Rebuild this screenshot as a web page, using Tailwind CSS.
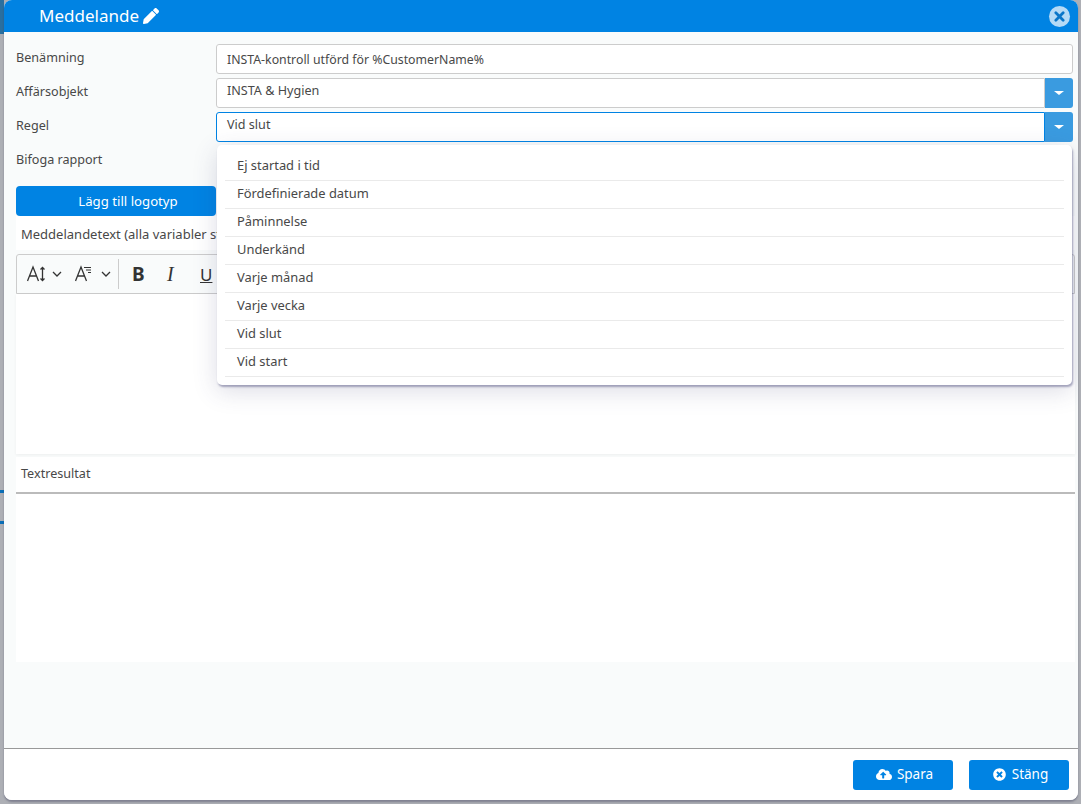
<!DOCTYPE html>
<html lang="en">
  <head>
    <meta charset="UTF-8" />
    <meta name="viewport" content="width=device-width, initial-scale=1.0" />
    <title>Meddelande</title>
    <script src="https://cdn.jsdelivr.net/npm/@tailwindcss/browser@4"></script>
  </head>
  <body class="relative h-screen overflow-hidden bg-[#adafb5] font-['Noto_Sans','Open_Sans',sans-serif] text-[12.6px] text-[#484848]">
    <!-- bits of the page behind the modal -->
    <div class="absolute top-0 left-0 h-[34px] w-[4px] bg-[#2a6f9f]"></div>
    <div class="absolute top-[490px] left-0 h-[3px] w-[4px] bg-[#0a6fb8]"></div>
    <div class="absolute top-[521px] left-0 h-[3px] w-[4px] bg-[#0a6fb8]"></div>

    <div class="relative ml-[4px] flex h-[800px] w-[1074px] flex-col overflow-hidden rounded-t-[8px] rounded-b-[8px] bg-[#f9fbfb] shadow-[0_2px_2px_rgba(60,60,90,0.4)]">
      <!-- header -->
      <div class="flex h-[32px] shrink-0 items-center justify-between bg-[#0083e3] pl-[35px] pr-[8px] text-white">
        <div class="flex items-center gap-[4px] text-[17px]">
          <span>Meddelande</span>
          <svg class="h-[16px] w-[16px]" viewBox="0 0 512 512" fill="#fff"><path d="M497.9 142.1l-46.1 46.1c-4.7 4.7-12.3 4.7-17 0l-111-111c-4.7-4.7-4.7-12.3 0-17l46.1-46.1c18.7-18.7 49.1-18.7 67.9 0l60.1 60.1c18.8 18.7 18.8 49.1 0 67.9zM284.2 99.8L21.6 362.4.4 483.9c-2.9 16.4 11.4 30.6 27.8 27.8l121.5-21.3 262.6-262.6c4.7-4.7 4.7-12.3 0-17l-111-111c-4.8-4.7-12.4-4.7-17.1 0z"/></svg>
        </div>
        <div class="flex h-[21px] w-[21px] items-center justify-center rounded-full bg-[#b5daf6]">
          <svg class="h-[11px] w-[11px]" viewBox="0 0 12 12" stroke="#0a76c9" stroke-width="3" stroke-linecap="round"><path d="M2 2l8 8M10 2l-8 8"/></svg>
        </div>
      </div>

      <!-- form -->
      <div class="flex flex-1 flex-col pl-[12px] pr-[3px]">
        <div class="mt-[12px] mr-[2px] flex h-[30px] items-start">
          <label class="w-[200px] pt-[5px]">Benämning</label>
          <div class="flex h-[30px] flex-1 items-center rounded-[3px] border border-[#ccc] bg-white pt-[2px] pl-[10px] pr-[10px] text-[12.3px]">INSTA-kontroll utförd för %CustomerName%</div>
        </div>
        <div class="mt-[4px] mr-[2px] flex h-[30px] items-start">
          <label class="w-[200px] pt-[5px]">Affärsobjekt</label>
          <div class="flex h-[30px] flex-1 rounded-[3px]">
            <div class="flex-1 rounded-l-[3px] border border-[#ccc] bg-white pl-[10px] pt-[3px]">INSTA &amp; Hygien</div>
            <div class="flex w-[28px] items-center justify-center rounded-r-[3px] bg-[#3a9be0]"><span class="h-0 w-0 border-x-[5px] border-t-[4px] border-x-transparent border-t-white"></span></div>
          </div>
        </div>
        <div class="mt-[4px] mr-[2px] flex h-[30px] items-start">
          <label class="w-[200px] pt-[5px]">Regel</label>
          <div class="flex h-[30px] flex-1 rounded-[3px]">
            <div class="flex-1 rounded-l-[3px] border border-[#0083e3] bg-white pl-[10px] pt-[3px]">Vid slut</div>
            <div class="flex w-[28px] items-center justify-center rounded-r-[3px] bg-[#3a9be0]"><span class="h-0 w-0 border-x-[5px] border-t-[4px] border-x-transparent border-t-white"></span></div>
          </div>
        </div>
        <div class="mt-[4px] h-[40px] pt-[5px]">Bifoga rapport</div>
        <div class="flex h-[30px] w-[200px] items-center justify-center rounded-[4px] bg-[#0083e3] pt-[1px] pl-[24px] text-[13.2px] text-white">Lägg till logotyp</div>
        <div class="h-[34px] bg-white pl-[5px] pt-[9px] text-[13px]">Meddelandetext (alla variabler stöds)</div>

        <!-- editor -->
        <div class="mt-[4px] flex h-[40px] w-full items-center rounded-t-[3px] border border-[#ccc] bg-[#f9fbfb] pl-[10px]">
          <svg class="h-[20px] w-[20px]" viewBox="0 0 20 20" fill="none" stroke="#333" stroke-width="1.3"><path d="M0.5 17L6 3l5.5 14M2.5 12h7"/><path d="M15.5 3.5v13M13.5 5.5l2-2 2 2M13.5 14.5l2 2 2-2"/></svg>
          <svg class="ml-[5px] h-[8px] w-[10px]" viewBox="0 0 10 8" fill="none" stroke="#333" stroke-width="1.3"><path d="M1 2l4 4 4-4"/></svg>
          <svg class="ml-[13px] h-[20px] w-[17px]" viewBox="0 0 17 20" fill="none" stroke="#333" stroke-width="1.3"><path d="M0.5 17L6 3l5.5 14M2.5 12h7"/><path d="M9 3.5h7M11 6h5M13 8.5h3" stroke-width="1"/></svg>
          <svg class="ml-[9px] h-[8px] w-[10px]" viewBox="0 0 10 8" fill="none" stroke="#333" stroke-width="1.3"><path d="M1 2l4 4 4-4"/></svg>
          <div class="ml-[7px] h-[30px] w-px bg-[#ccc]"></div>
          <span class="ml-[13px] w-[14px] text-[19px] leading-none font-bold text-[#333]">B</span>
          <span class="ml-[21px] w-[10px] font-['Liberation_Serif',serif] text-[20px] leading-none text-[#333] italic">I</span>
          <span class="ml-[23px] w-[14px] text-[17px] leading-none text-[#333] underline">U</span>
        </div>
        <div class="h-[160px] shrink-0 bg-white shadow-[0_1px_3px_rgba(0,0,0,0.05)]"></div>

        <div class="mt-[3px] h-[35px] bg-white pl-[5px] pt-[8px]">Textresultat</div>
        <div class="h-[2px] bg-[#bbb]"></div>
        <div class="h-[168px] bg-white"></div>
      </div>

      <!-- footer -->
      <div class="flex h-[52px] shrink-0 items-center justify-end gap-[16px] border-t border-[#999] bg-white pr-[9px]">
        <button class="flex h-[30px] w-[100px] items-center justify-center gap-[5px] rounded-[3px] bg-[#0083e3] pl-[3px] text-[13.5px] text-white">
          <svg class="h-[13px] w-[16px]" viewBox="0 0 640 512" fill="#fff"><path d="M537.6 226.6c4.1-10.7 6.4-22.4 6.4-34.6 0-53-43-96-96-96-19.7 0-38.1 6-53.3 16.2C367 64.2 315.3 32 256 32c-88.4 0-160 71.6-160 160 0 2.7.1 5.4.2 8.1C40.2 219.8 0 273.2 0 336c0 79.5 64.5 144 144 144h368c70.7 0 128-57.3 128-128 0-61.9-44-113.6-102.4-125.4zM393.4 288H328v112c0 8.8-7.2 16-16 16h-48c-8.8 0-16-7.2-16-16V288h-65.4c-14.3 0-21.4-17.2-11.3-27.3l105.4-105.4c6.2-6.2 16.4-6.2 22.6 0l105.4 105.4c10.1 10.1 2.9 27.3-11.3 27.3z"/></svg>
          Spara
        </button>
        <button class="flex h-[30px] w-[100px] items-center justify-center gap-[6px] rounded-[3px] bg-[#0083e3] pl-[3px] text-[13.5px] text-white">
          <svg class="h-[13px] w-[13px]" viewBox="0 0 512 512" fill="#fff"><path d="M256 8C119 8 8 119 8 256s111 248 248 248 248-111 248-248S393 8 256 8zm121.6 313.1c4.7 4.7 4.7 12.3 0 17L338 377.6c-4.7 4.7-12.3 4.7-17 0L256 312l-65.1 65.6c-4.7 4.7-12.3 4.7-17 0L134.4 338c-4.7-4.7-4.7-12.3 0-17l65.6-65-65.6-65.1c-4.7-4.7-4.7-12.3 0-17l39.6-39.6c4.7-4.7 12.3-4.7 17 0l65 65.7 65.1-65.6c4.7-4.7 12.3-4.7 17 0l39.6 39.6c4.7 4.7 4.7 12.3 0 17L312 256l65.6 65.1z"/></svg>
          Stäng
        </button>
      </div>

      <!-- open dropdown -->
      <ul class="absolute top-[145px] left-[213px] w-[855px] rounded-[5px] bg-white px-[8px] pt-[8px] pb-[8px] text-[12.9px] shadow-[1px_2px_2px_rgba(70,70,120,0.45),0_6px_24px_rgba(60,60,110,0.18)]">
        <li class="flex h-[28px] items-center border-b border-[#eaeaea] pb-[2px] pl-[12px]">Ej startad i tid</li>
        <li class="flex h-[28px] items-center border-b border-[#eaeaea] pb-[2px] pl-[12px]">Fördefinierade datum</li>
        <li class="flex h-[28px] items-center border-b border-[#eaeaea] pb-[2px] pl-[12px]">Påminnelse</li>
        <li class="flex h-[28px] items-center border-b border-[#eaeaea] pb-[2px] pl-[12px]">Underkänd</li>
        <li class="flex h-[28px] items-center border-b border-[#eaeaea] pb-[2px] pl-[12px]">Varje månad</li>
        <li class="flex h-[28px] items-center border-b border-[#eaeaea] pb-[2px] pl-[12px]">Varje vecka</li>
        <li class="flex h-[28px] items-center border-b border-[#eaeaea] pb-[2px] pl-[12px]">Vid slut</li>
        <li class="flex h-[28px] items-center border-b border-[#eaeaea] pb-[2px] pl-[12px]">Vid start</li>
      </ul>
    </div>
  </body>
</html>
